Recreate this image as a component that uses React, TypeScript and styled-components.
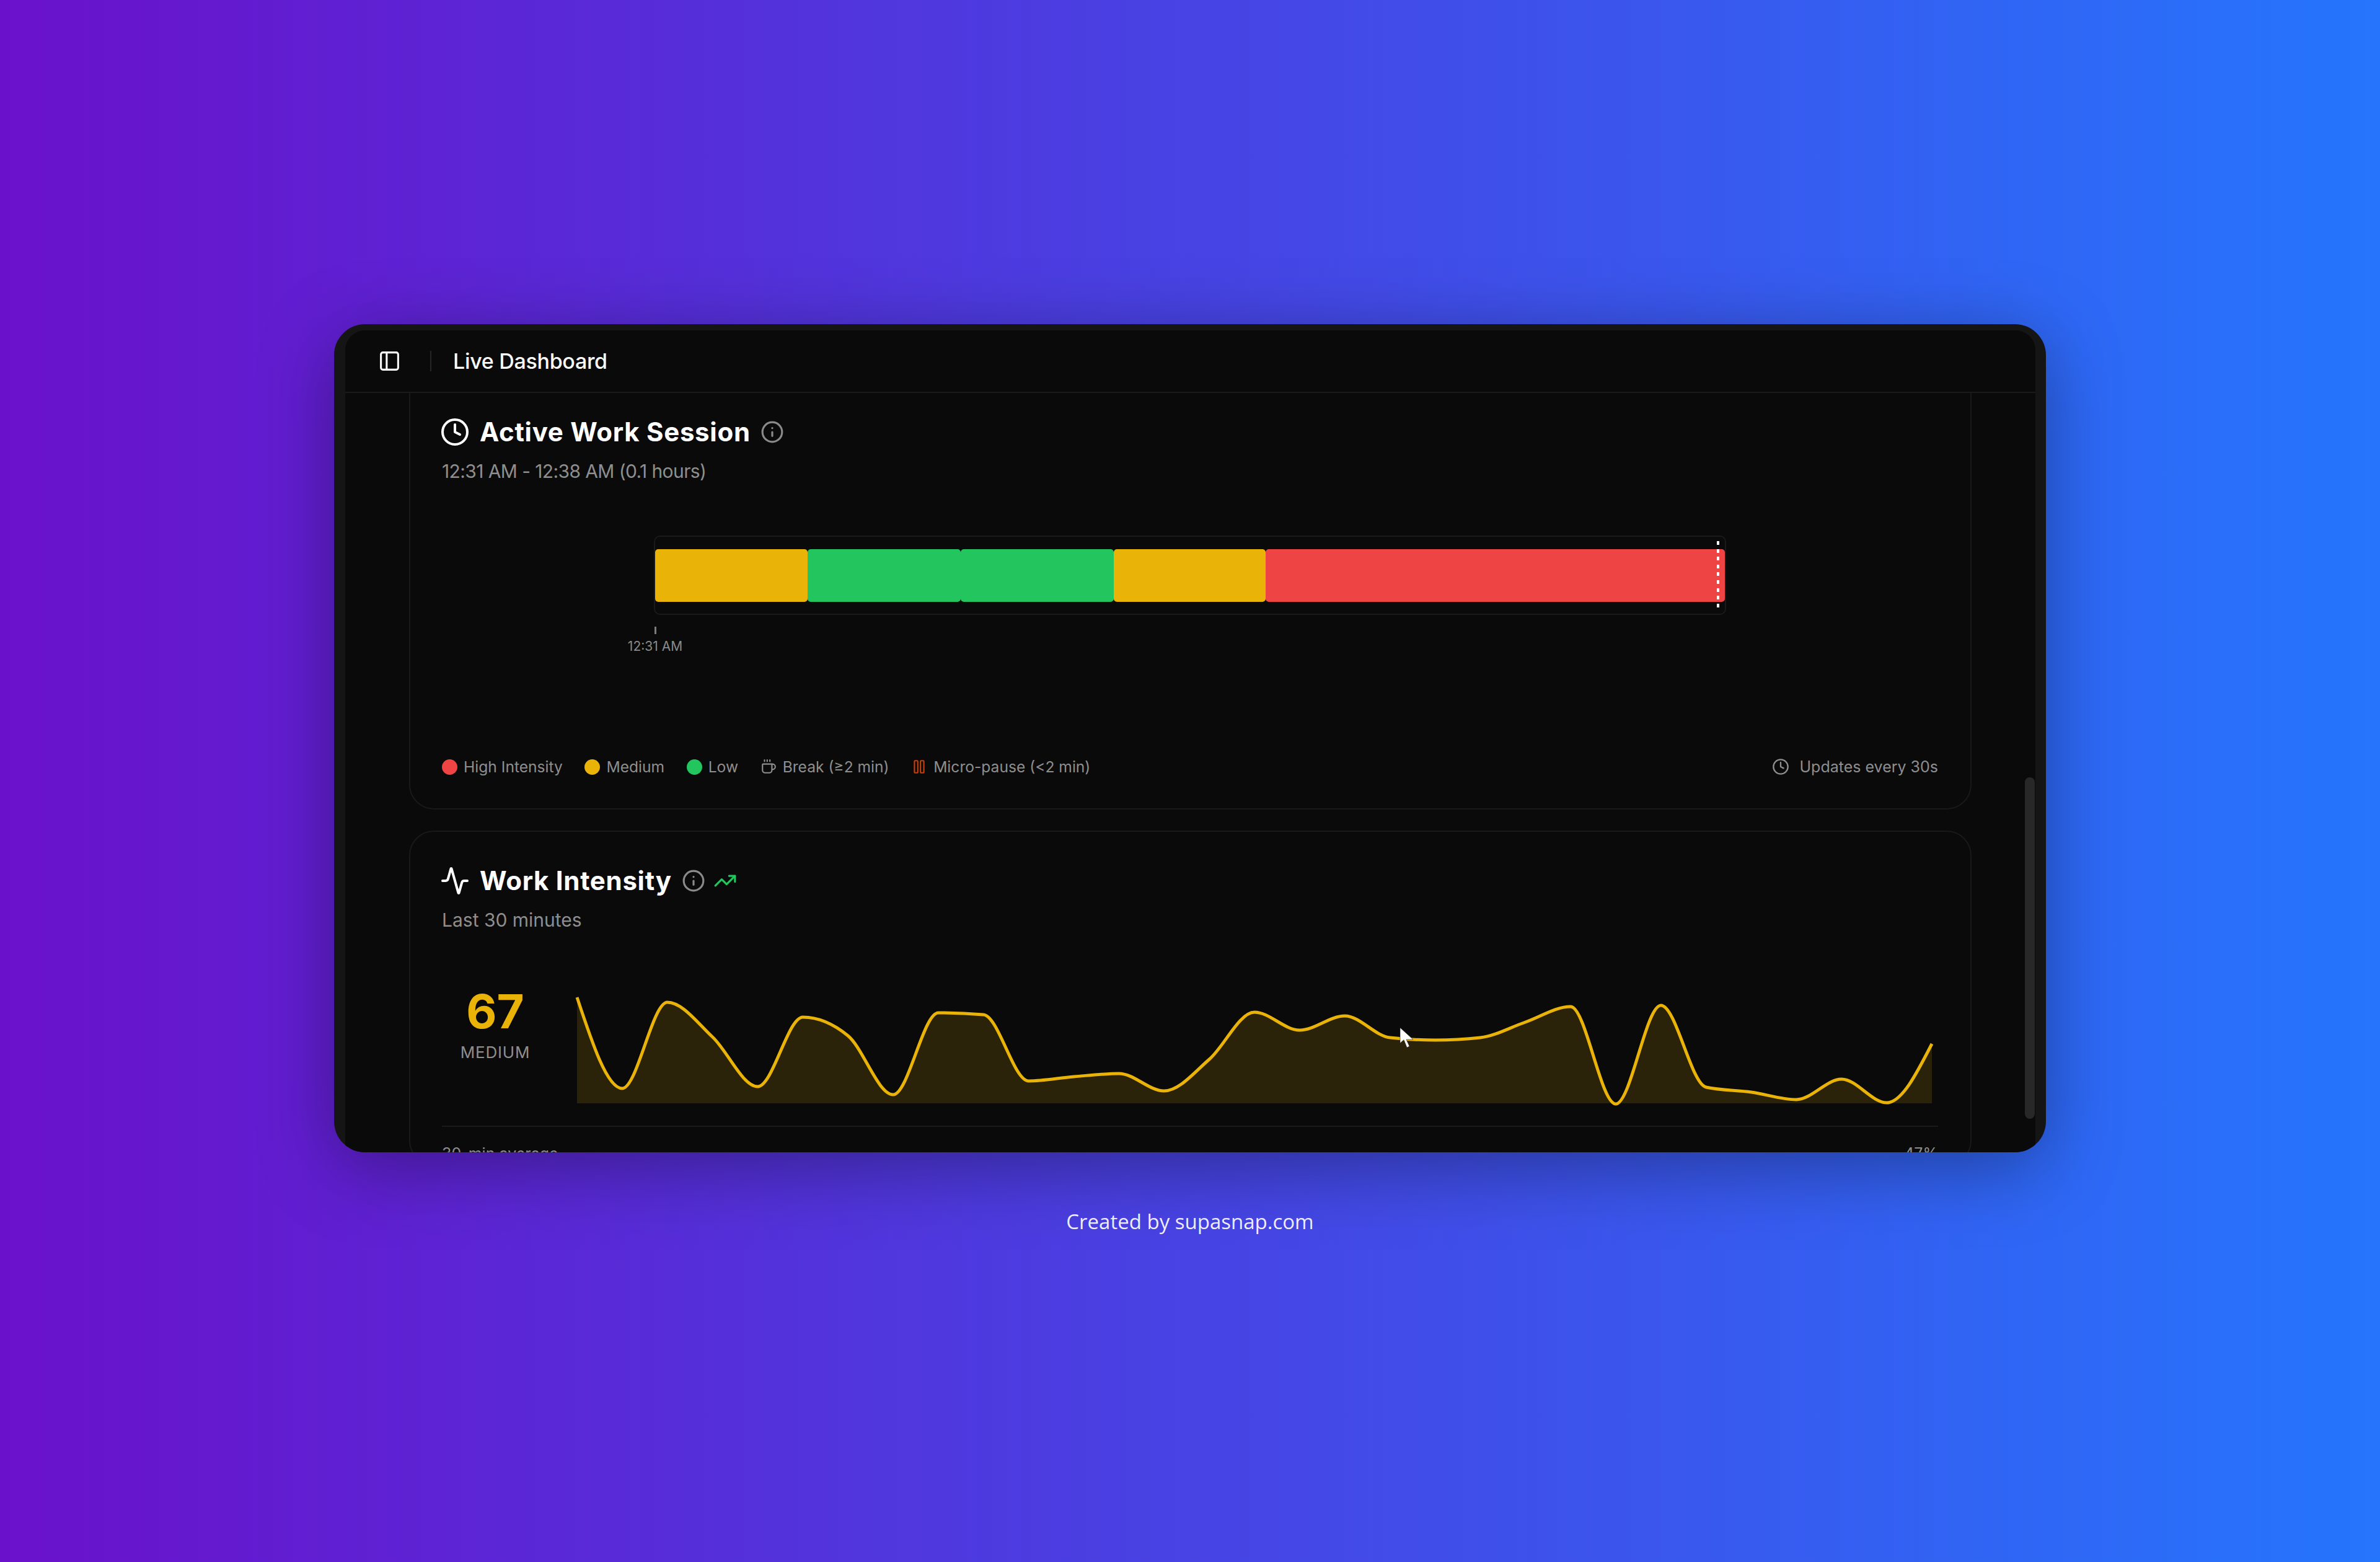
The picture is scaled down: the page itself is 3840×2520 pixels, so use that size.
import React from 'react';
import styled, { createGlobalStyle } from 'styled-components';
import { Activity, Clock, Coffee, Info, PanelLeft, Pause, TrendingUp } from 'lucide-react';

const RED = '#ef4444';
const YELLOW = '#eab308';
const GREEN = '#22c55e';

// height of the chart is 180, values are y positions inside it
const intensity = [
  8, 155, 16, 72, 152, 40, 70, 165, 33, 36, 143, 136, 131, 159, 108, 32, 61, 38, 73, 77, 73, 48, 23, 180,
  21, 153, 161, 173, 140, 178, 83,
];
const CHART_W = 2186;
const CHART_H = 179;

const segments = [
  { color: YELLOW, size: 246 },
  { color: GREEN, size: 247 },
  { color: GREEN, size: 247 },
  { color: YELLOW, size: 245 },
  { color: RED, size: 741 },
];

const sign = (n: number) => (n < 0 ? -1 : 1);

// monotone cubic, the same curve a recharts Area draws
const monotonePath = (ys: number[], width: number) => {
  const step = width / (ys.length - 1);
  const slopes = ys.slice(1).map((y, i) => (y - ys[i]) / step);
  const tangents = ys.map((_, i) => {
    if (i === 0 || i === ys.length - 1) return 0;
    const a = slopes[i - 1];
    const b = slopes[i];
    return (sign(a) + sign(b)) * Math.min(Math.abs(a), Math.abs(b), 0.5 * Math.abs((a + b) / 2));
  });
  tangents[0] = (3 * slopes[0] - tangents[1]) / 2;
  tangents[ys.length - 1] = (3 * slopes[slopes.length - 1] - tangents[ys.length - 2]) / 2;
  let d = `M0 ${ys[0]}`;
  for (let i = 0; i < ys.length - 1; i++) {
    const x0 = i * step;
    const x1 = (i + 1) * step;
    const dx = step / 3;
    d += ` C${x0 + dx} ${ys[i] + dx * tangents[i]} ${x1 - dx} ${ys[i + 1] - dx * tangents[i + 1]} ${x1} ${ys[i + 1]}`;
  }
  return d;
};

const GlobalStyle = createGlobalStyle`
  html, body {
    margin: 0;
    padding: 0;
  }
  * {
    box-sizing: border-box;
  }
`;

const Page = styled.div`
  width: 3840px;
  height: 2520px;
  padding-top: 523px;
  display: flex;
  flex-direction: column;
  align-items: center;
  overflow: hidden;
  background: linear-gradient(90deg, #6a11cb 0%, #2575fc 100%);
  font-family: Inter, 'Liberation Sans', sans-serif;
`;

const Frame = styled.div`
  width: 2762px;
  height: 1336px;
  flex: none;
  padding: 10px 17px 0 18px;
  border-radius: 50px;
  background: #151515;
  overflow: hidden;
  box-shadow: 0 24px 120px rgba(0, 0, 0, 0.35);
`;

const Inner = styled.div`
  height: 100%;
  display: flex;
  flex-direction: column;
  background: #0a0a0a;
  border-radius: 32px 32px 0 0;
`;

const Header = styled.header`
  height: 101px;
  flex: none;
  display: flex;
  align-items: center;
  padding-left: 53px;
  border-bottom: 2px solid #1a1a1a;
  color: #fafafa;
`;

const Separator = styled.span`
  width: 2px;
  height: 33px;
  margin: 0 35px 0 47px;
  background: #262626;
`;

const PageTitle = styled.h1`
  margin: 0;
  font-size: 34px;
  font-weight: 500;
  letter-spacing: -0.3px;
  color: #fafafa;
`;

const Scroller = styled.main`
  position: relative;
  flex: 1;
  min-height: 0;
  overflow: hidden;
  padding: 0 103px;
`;

const ScrollThumb = styled.div`
  position: absolute;
  top: 620px;
  right: 1px;
  width: 16px;
  height: 551px;
  border-radius: 8px;
  background: #282828;
`;

const Card = styled.section<{ $scrolled?: boolean }>`
  border: 2px solid #191919;
  border-radius: 40px;
  padding: ${(p) => (p.$scrolled ? '97px' : '55px')} 52px 0 51px;
  margin: ${(p) => (p.$scrolled ? '-60px' : '34px')} 0 0;
`;

const TitleRow = styled.div`
  height: 48px;
  display: flex;
  align-items: center;
  gap: 16px;
  margin-left: -3px;
  color: #fff;
`;

const CardTitle = styled.h2`
  margin: 0 0 2px;
  font-size: 42px;
  font-weight: 700;
  letter-spacing: 0.7px;
  color: #fff;
`;

const TrendIcon = styled(TrendingUp)`
  margin-left: -3px;
`;

const Subtitle = styled.p<{ $tight?: boolean }>`
  margin: 24px 0 0;
  height: 30px;
  line-height: 30px;
  font-size: 30px;
  letter-spacing: ${(p) => (p.$tight ? '-0.6px' : '0')};
  color: #8e8e8e;
`;

const Timeline = styled.div`
  margin: 89px auto 0;
  width: 1730px;
`;

const Track = styled.div`
  position: relative;
  height: 128px;
  display: flex;
  align-items: center;
  border: 2px solid #1a1a1a;
  border-radius: 10px;
`;

const Segment = styled.div<{ $color: string; $size: number }>`
  flex: ${(p) => p.$size} 1 0;
  height: 85px;
  border-radius: 5px;
  background: ${(p) => p.$color};
`;

const NowMarker = styled.div`
  position: absolute;
  top: 7px;
  bottom: 7px;
  right: 9px;
  width: 4px;
  background: repeating-linear-gradient(180deg, #fff 0 6px, transparent 6px 12.6px);
`;

const AxisMark = styled.div`
  width: 0;
  margin: 19px 0 0 2px;
  display: flex;
  flex-direction: column;
  align-items: center;
`;

const AxisTick = styled.span`
  flex: none;
  width: 3px;
  height: 12px;
  background: #7c7c7c;
`;

const AxisLabel = styled.span`
  margin-top: 7px;
  white-space: nowrap;
  font-size: 21px;
  line-height: 26px;
  color: #8a8a8a;
`;

const LegendRow = styled.div`
  margin-top: 167px;
  padding-bottom: 53px;
  height: 81px;
  display: flex;
  align-items: center;
  justify-content: space-between;
`;

const LegendItems = styled.div`
  display: flex;
  align-items: center;
  gap: 35.6px;
`;

const LegendItem = styled.span`
  display: inline-flex;
  align-items: center;
  gap: 10px;
  font-size: 24.6px;
  color: #8e8e8e;
`;

const Dot = styled.span<{ $color: string }>`
  width: 25px;
  height: 25px;
  border-radius: 50%;
  background: ${(p) => p.$color};
`;

const UpdatesNote = styled(LegendItem)`
  gap: 16px;
  font-size: 25px;
`;

const ChartRow = styled.div`
  position: relative;
  margin-top: 102px;
  display: flex;
  align-items: flex-start;
  gap: 46px;
`;

const Score = styled.div`
  width: 172px;
  flex: none;
  display: flex;
  flex-direction: column;
  align-items: center;
  margin-top: -2px;
`;

const ScoreValue = styled.span`
  font-size: 76px;
  line-height: 64px;
  font-weight: 700;
  color: ${YELLOW};
`;

const ScoreLabel = styled.span`
  margin-top: 20px;
  font-size: 26px;
  line-height: 30px;
  letter-spacing: 0.8px;
  color: #8e8e8e;
`;

const Chart = styled.svg`
  display: block;
  flex: none;
  overflow: visible;
`;

const Pointer = styled.svg`
  position: absolute;
  left: 1545px;
  top: 56px;
`;

const StatRow = styled.div`
  margin-top: 36px;
  padding-top: 26px;
  border-top: 2px solid #1a1a1a;
  display: flex;
  justify-content: space-between;
  font-size: 25px;
  line-height: 34px;
  color: #8e8e8e;
`;

const Credit = styled.p`
  margin: 88px 0 0;
  font-family: 'Open Sans', 'Noto Sans', sans-serif;
  font-size: 33px;
  line-height: 48px;
  color: rgba(255, 255, 255, 0.92);
`;

export default function App() {
  const line = monotonePath(intensity, CHART_W);
  return (
    <Page>
      <GlobalStyle />
      <Frame>
        <Inner>
          <Header>
            <PanelLeft size={37} />
            <Separator />
            <PageTitle>Live Dashboard</PageTitle>
          </Header>
          <Scroller>
            <Card $scrolled>
              <TitleRow>
                <Clock size={48} />
                <CardTitle>Active Work Session</CardTitle>
                <Info size={38} color="#8a8a8a" />
              </TitleRow>
              <Subtitle $tight>12:31 AM - 12:38 AM (0.1 hours)</Subtitle>
              <Timeline>
                <Track>
                  {segments.map((s, i) => (
                    <Segment key={i} $color={s.color} $size={s.size} />
                  ))}
                  <NowMarker />
                </Track>
                <AxisMark>
                  <AxisTick />
                  <AxisLabel>12:31 AM</AxisLabel>
                </AxisMark>
              </Timeline>
              <LegendRow>
                <LegendItems>
                  <LegendItem>
                    <Dot $color={RED} />
                    High Intensity
                  </LegendItem>
                  <LegendItem>
                    <Dot $color={YELLOW} />
                    Medium
                  </LegendItem>
                  <LegendItem>
                    <Dot $color={GREEN} />
                    Low
                  </LegendItem>
                  <LegendItem>
                    <Coffee size={26} />
                    Break (≥2 min)
                  </LegendItem>
                  <LegendItem>
                    <Pause size={26} color="#c2410c" />
                    Micro-pause (&lt;2 min)
                  </LegendItem>
                </LegendItems>
                <UpdatesNote>
                  <Clock size={28} />
                  Updates every 30s
                </UpdatesNote>
              </LegendRow>
            </Card>
            <Card>
              <TitleRow>
                <Activity size={48} />
                <CardTitle>Work Intensity</CardTitle>
                <Info size={38} color="#8a8a8a" />
                <TrendIcon size={38} color={GREEN} />
              </TitleRow>
              <Subtitle>Last 30 minutes</Subtitle>
              <ChartRow>
                <Score>
                  <ScoreValue>67</ScoreValue>
                  <ScoreLabel>MEDIUM</ScoreLabel>
                </Score>
                <Chart width={CHART_W} height={CHART_H} viewBox={`0 0 ${CHART_W} ${CHART_H}`}>
                  <path d={`${line} V${CHART_H} H0 Z`} fill={YELLOW} fillOpacity={0.15} />
                  <path d={line} fill="none" stroke={YELLOW} strokeWidth={5} />
                </Chart>
                <Pointer width="24" height="35" viewBox="0 0 24 35">
                  <path d="M1 1 V26 L7 20.5 L12 33 L16 31 L11 20 H22 Z" fill="#fff" stroke="#222" strokeWidth="0.6" />
                </Pointer>
              </ChartRow>
              <StatRow>
                <span>30-min average</span>
                <span>47%</span>
              </StatRow>
            </Card>
            <ScrollThumb />
          </Scroller>
        </Inner>
      </Frame>
      <Credit>Created by supasnap.com</Credit>
    </Page>
  );
}
